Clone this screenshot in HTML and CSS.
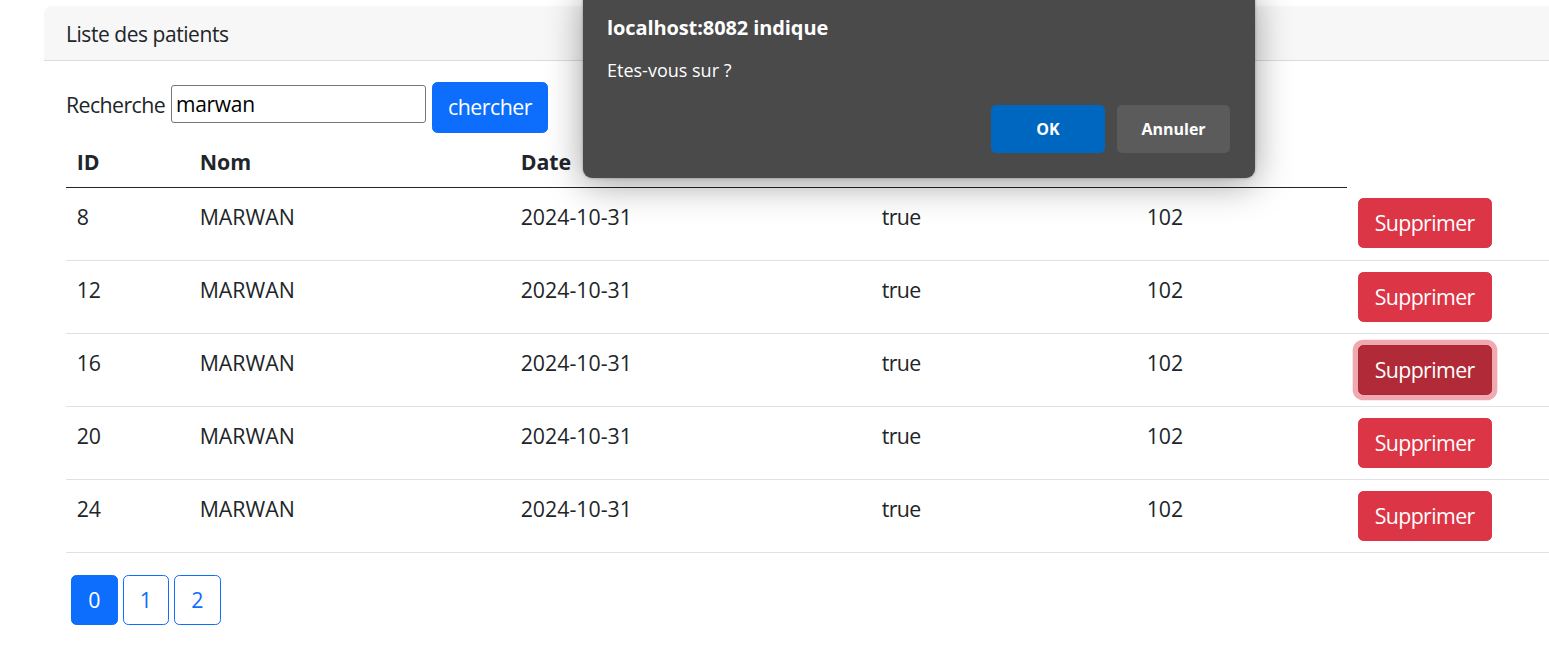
FILE: index.html
```html
<!DOCTYPE html>
<html lang="fr">
<head>
<meta charset="utf-8">
<title>Liste des patients</title>
<link rel="stylesheet" href="styles.css">
</head>
<body>
<div class="page">
  <div class="card">
    <div class="card-header">Liste des patients</div>
    <div class="card-body">
      <form class="search">
        <label class="search-label" for="kw">Recherche</label>
        <input id="kw" class="search-input" type="text" value="marwan">
        <button type="button" class="btn btn-primary">chercher</button>
      </form>
      <table class="table">
        <colgroup>
          <col class="c1"><col class="c2"><col class="c3"><col class="c4"><col class="c5"><col class="c6">
        </colgroup>
        <thead>
          <tr><th>ID</th><th>Nom</th><th>Date</th><th>Malade</th><th>Score</th></tr>
        </thead>
        <tbody>
          <tr><td>8</td><td>MARWAN</td><td>2024-10-31</td><td class="lc">true</td><td>102</td><td class="act"><button type="button" class="btn btn-danger">Supprimer</button></td></tr>
          <tr><td>12</td><td>MARWAN</td><td>2024-10-31</td><td class="lc">true</td><td>102</td><td class="act"><button type="button" class="btn btn-danger">Supprimer</button></td></tr>
          <tr><td>16</td><td>MARWAN</td><td>2024-10-31</td><td class="lc">true</td><td>102</td><td class="act"><button type="button" class="btn btn-danger is-focused">Supprimer</button></td></tr>
          <tr><td>20</td><td>MARWAN</td><td>2024-10-31</td><td class="lc">true</td><td>102</td><td class="act"><button type="button" class="btn btn-danger">Supprimer</button></td></tr>
          <tr><td>24</td><td>MARWAN</td><td>2024-10-31</td><td class="lc">true</td><td>102</td><td class="act"><button type="button" class="btn btn-danger">Supprimer</button></td></tr>
        </tbody>
      </table>
      <div class="pager">
        <a class="btn btn-page active">0</a>
        <a class="btn btn-page">1</a>
        <a class="btn btn-page">2</a>
      </div>
    </div>
  </div>
</div>
<div class="alert-dialog">
  <div class="alert-title">localhost:8082 indique</div>
  <div class="alert-msg">Etes-vous sur ?</div>
  <div class="alert-actions">
    <button type="button" class="alert-btn alert-ok">OK</button>
    <button type="button" class="alert-btn alert-cancel">Annuler</button>
  </div>
</div>
</body>
</html>
```

FILE: styles.css
```css
html, body {
  margin: 0;
  padding: 0;
  background: #fff;
  overflow: hidden;
}
body {
  font-family: "Open Sans", "Noto Sans", sans-serif;
  font-size: 21.33px;
  line-height: 1.5;
  color: #212529;
  width: 1549px;
  height: 659px;
  position: relative;
}
.page {
  padding: 6px 0 0 44px;
}
.card {
  width: 1540px;
  border-radius: 8px;
  box-sizing: border-box;
}
.card-header {
  background: #f7f7f7;
  border-bottom: 1px solid #dcdcdc;
  padding: 12px 21px 0 22px;
  height: 55px;
  box-sizing: border-box;
  font-size: 21px;
  line-height: 32px;
  letter-spacing: -0.45px;
  border-radius: 8px 8px 0 0;
}
.card-body {
  padding: 21px 0 0 22px;
}
.search {
  display: flex;
  align-items: flex-start;
  margin: 0;
}
.search-label {
  margin-top: 7px;
  line-height: 32px;
  letter-spacing: -0.6px;
}
.search-input {
  margin: 3px 0 0 6px;
  width: 255px;
  height: 38px;
  box-sizing: border-box;
  border: 1px solid #767676;
  border-radius: 3px;
  padding: 0 4px;
  font-family: inherit;
  font-size: 21px;
  letter-spacing: -0.3px;
  color: #000;
}
.btn {
  display: inline-block;
  font-family: inherit;
  font-size: 21.33px;
  line-height: 32px;
  padding: 8px 16px;
  border: 1.33px solid transparent;
  border-radius: 5.33px;
  box-sizing: border-box;
  text-align: center;
  cursor: pointer;
  text-decoration: none;
}
.btn-primary {
  margin-left: 6px;
  background: #0d6efd;
  border-color: #0d6efd;
  color: #fff;
  height: 50.67px;
  width: 116px;
  padding: 8px 0;
  letter-spacing: -0.5px;
}
.table {
  width: 1497px;
  border-collapse: collapse;
  table-layout: fixed;
  margin: 1px 0 22px 0;
  vertical-align: top;
}
.c1 { width: 123px; }
.c2 { width: 321px; }
.c3 { width: 361px; }
.c4 { width: 265px; }
.c5 { width: 211px; }
.c6 { width: 216px; }
.table th {
  text-align: left;
  font-weight: 700;
  padding: 12.5px 10.67px 8.5px 10.67px;
  line-height: 32px;
  border-bottom: 1px solid #212529;
}
.table td {
  padding: 13px 10.67px 11px 10.67px;
  line-height: 32px;
  border-bottom: 1px solid #dee2e6;
  vertical-align: top;
}
.table td.lc {
  letter-spacing: -0.6px;
}
.table td.act {
  padding-top: 11px;
}
.table tbody tr:first-child td.act {
  padding-bottom: 12px;
}
.btn-danger {
  background: #dc3545;
  border-color: #dc3545;
  color: #fff;
  height: 50px;
  width: 134px;
  padding: 8px 0;
  letter-spacing: -0.6px;
}
.btn-danger.is-focused {
  background: #b02a37;
  border-color: #a52834;
  box-shadow: 0 0 0 5.33px rgba(225,83,97,.5);
}
.pager {
  display: flex;
  gap: 5px;
  padding-left: 5px;
}
.btn-page {
  width: 46.5px;
  height: 50px;
  padding: 8px 0;
  color: #0d6efd;
  border-color: #0d6efd;
  background: #fff;
}
.btn-page.active {
  background: #0d6efd;
  color: #fff;
}
.alert-dialog {
  position: absolute;
  left: 583px;
  top: -12px;
  width: 672px;
  height: 190px;
  box-sizing: border-box;
  background: #4a4a4a;
  border-radius: 9px;
  box-shadow: 0 6px 36px rgba(0,0,0,.38), 0 0 3px rgba(0,0,0,.3);
  padding: 27px 24px 0 24px;
  color: #fff;
  font-family: "Open Sans", "Noto Sans", sans-serif;
}
.alert-title {
  font-weight: 700;
  font-size: 20px;
  line-height: 26px;
  letter-spacing: -0.1px;
}
.alert-msg {
  margin-top: 17px;
  font-size: 18px;
  line-height: 24px;
}
.alert-actions {
  display: flex;
  justify-content: flex-end;
  gap: 12px;
  margin-top: 23px;
  padding-right: 1px;
}
.alert-btn {
  width: 114px;
  height: 48px;
  border: none;
  border-radius: 5px;
  color: #fff;
  font-family: inherit;
  font-weight: 700;
  font-size: 16px;
}
.alert-ok { background: #0067c0; }
.alert-cancel { background: #5b5b5b; width: 113px; }
```
